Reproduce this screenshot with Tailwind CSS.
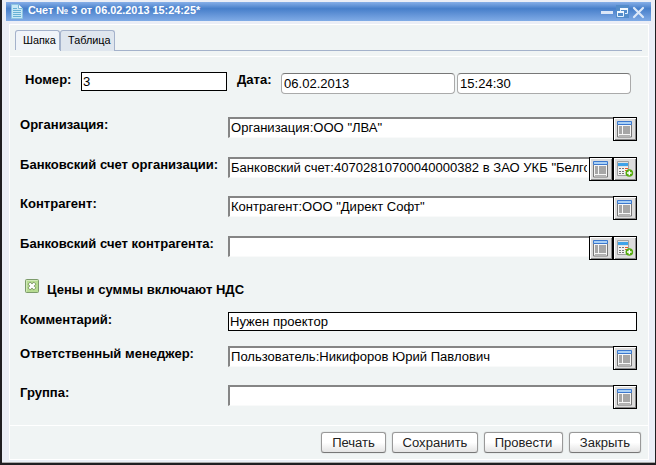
<!DOCTYPE html>
<html lang="ru">
<head>
<meta charset="utf-8">
<title>Счет № 3</title>
<script src="https://cdn.jsdelivr.net/npm/@tailwindcss/browser@4"></script>
</head>
<body class="w-[656px] h-[465px] overflow-hidden bg-[#201e21] font-['Liberation_Sans',Arial,sans-serif] text-[13.06px] leading-[16px] text-black">
<svg class="hidden">
  <symbol id="list" viewBox="0 0 16 17">
    <path d="M.5 3.500h14v12.500H.5z" fill="#f6f6f6" stroke="#777"/>
    <path d="M.5.5h14v3H.5z" fill="#a9d0f5" stroke="#3b78cf"/>
    <path d="M2 5h3v8H2zM6 5h7v8H6z" fill="#a6a6a6"/>
    <path d="M2 14h11v1H2z" fill="#b0b0b0"/>
  </symbol>
  <symbol id="add" viewBox="0 0 17 17">
    <path d="M.5.5h11v14H.5z" fill="#e2e2e2" stroke="#a0a0a0"/>
    <path d="M1 2h10v3H1z" fill="#3fa3e8"/>
    <path d="M1 6h10v8H1z" fill="#f2f2f2"/>
    <path d="M2 7.500h2M5 7.500h2M2 10.500h2M5 10.500h2M2 12.500h2M5 12.500h2" stroke="#777"/>
    <path d="M8 7.500h3M8 9.500h2" stroke="#ed5b25"/>
    <circle cx="12.300" cy="12" r="3.800" fill="#55ab0c"/>
    <path d="M12.300 9.700v4.600M10 12h4.600" stroke="#fff" stroke-width="1.400"/>
  </symbol>
</svg>
<div class="ml-[2px] w-[653px] pt-[2px] h-[463px] bg-[#ebeef6] border-b border-[#aaa]">
  <div class="ml-1 w-[645px] h-[19px] flex items-start bg-linear-to-b from-[#86afe8] via-[#477fca] via-35% to-[#80abe6]">
    <svg class="ml-[5px] mt-[2px] w-3 h-[15px]" viewBox="0 0 12 15"><path d="M.5.5h7l4 4v10H.5z" fill="#c7e8f6" stroke="#8dc5e2"/><path d="M7.500.5v4h4" fill="#f1fbff" stroke="#79b5d5"/><path d="M2 4.500h4M2 6.500h8M2 8.500h8M2 10.500h8M2 12.500h8" stroke="#66b1d5"/></svg>
    <div class="ml-[5px] grow font-bold text-[10.87px] leading-[16px] text-white whitespace-nowrap">Счет № 3 от 06.02.2013 15:24:25*</div>
    <svg class="w-[45px] h-[15px] mt-[2px] mr-[5px]" viewBox="0 0 45 15">
      <path d="M0 7h12v3H0z" fill="#dce7f8"/>
      <path d="M15 1h13v13H15z" fill="#538cca"/>
      <path d="M19.500 9V4.500h7v5H24" fill="none" stroke="#e4f2ff"/><path d="M19 4h8v2h-8z" fill="#f2f9ff"/>
      <path d="M16.500 7.500h6v5h-6z" fill="#538cca" stroke="#e4f2ff"/><path d="M16 7h7v2h-7z" fill="#f2f9ff"/>
      <path d="M33 4l9 9M42 4l-9 9" stroke="#dce8f9" stroke-width="2.200" stroke-linecap="round"/>
    </svg>
  </div>
  <div class="ml-[7px] mt-[3px] w-[640px] h-[436px] border border-white bg-[#f0f4f4] flex flex-col">
    <div class="h-8 border-b border-white pl-[5px] pr-[6px] pt-[5px] flex items-start text-[10.87px] leading-[19px]">
      <div class="w-[45px] h-5 pl-[7px] rounded-t-[3px] border border-b-0 border-[#a4b2cb] bg-[#f0f4f9] whitespace-nowrap">Шапка</div>
      <div class="w-[55px] h-[21px] pl-[7px] rounded-t-[3px] border border-b-0 border-[#a4b2cb] bg-[#dfe6ee] whitespace-nowrap">Таблица</div>
      <div class="h-[21px] grow border-b border-[#a4b2cb]"></div>
    </div>
    <div class="h-[369px] border-b border-white pl-[10px] pr-[11px]">
      <div class="flex items-start h-[60px] pt-[15px] pl-[5px]">
        <b class="w-14">Номер:</b>
        <div class="w-[146px] h-[19px] border border-black bg-white pl-px leading-[18px]">3</div>
        <b class="w-11 ml-[10px]">Дата:</b>
        <div class="mt-px w-[174px] h-[21px] rounded-[4px] border border-[#aaa] border-t-[#777] bg-white pl-[2px] leading-[20px]">06.02.2013</div>
        <div class="mt-px ml-[2px] w-[174px] h-[21px] rounded-[4px] border border-[#aaa] border-t-[#777] bg-white pl-[2px] leading-[20px]">15:24:30</div>
      </div>
      <div class="flex items-start h-10">
        <b class="w-[208px] whitespace-nowrap">Организация:</b>
        <div class="w-[385px] h-[21px] border-t-2 border-l-2 border-b border-[#858585] border-b-[#f9fafa] bg-white pl-px leading-[18px] whitespace-nowrap overflow-hidden">Организация:ООО "ЛВА"</div>
        <div class="w-6 h-6 border border-black bg-[#dcdcdc] shadow-[inset_1px_1px_0_#fff,inset_-1px_-1px_0_#888] pl-[3px] pt-[3px]"><svg class="w-4 h-[17px]"><use href="#list"/></svg></div>
      </div>
      <div class="flex items-start h-[39px]">
        <b class="w-[208px] whitespace-nowrap">Банковский счет организации:</b>
        <div class="w-[361px] h-[21px] border-t-2 border-l-2 border-b border-[#858585] border-b-[#f9fafa] bg-white pl-px pr-[2px] leading-[18px]"><div class="overflow-hidden whitespace-nowrap">Банковский счет:40702810700040000382 в ЗАО УКБ "Белго</div></div>
        <div class="w-6 h-6 border border-black bg-[#dcdcdc] shadow-[inset_1px_1px_0_#fff,inset_-1px_-1px_0_#888] pl-[3px] pt-[3px]"><svg class="w-4 h-[17px]"><use href="#list"/></svg></div>
        <div class="w-6 h-6 border border-black bg-[#dcdcdc] shadow-[inset_1px_1px_0_#fff,inset_-1px_-1px_0_#888] pl-[3px] pt-[3px]"><svg class="w-[17px] h-[17px]"><use href="#add"/></svg></div>
      </div>
      <div class="flex items-start h-10">
        <b class="w-[208px] whitespace-nowrap">Контрагент:</b>
        <div class="w-[385px] h-[21px] border-t-2 border-l-2 border-b border-[#858585] border-b-[#f9fafa] bg-white pl-px leading-[18px] whitespace-nowrap overflow-hidden">Контрагент:ООО "Директ Софт"</div>
        <div class="w-6 h-6 border border-black bg-[#dcdcdc] shadow-[inset_1px_1px_0_#fff,inset_-1px_-1px_0_#888] pl-[3px] pt-[3px]"><svg class="w-4 h-[17px]"><use href="#list"/></svg></div>
      </div>
      <div class="flex items-start h-[43px]">
        <b class="w-[208px] whitespace-nowrap">Банковский счет контрагента:</b>
        <div class="w-[361px] h-[21px] border-t-2 border-l-2 border-b border-[#858585] border-b-[#f9fafa] bg-white"></div>
        <div class="w-6 h-6 border border-black bg-[#dcdcdc] shadow-[inset_1px_1px_0_#fff,inset_-1px_-1px_0_#888] pl-[3px] pt-[3px]"><svg class="w-4 h-[17px]"><use href="#list"/></svg></div>
        <div class="w-6 h-6 border border-black bg-[#dcdcdc] shadow-[inset_1px_1px_0_#fff,inset_-1px_-1px_0_#888] pl-[3px] pt-[3px]"><svg class="w-[17px] h-[17px]"><use href="#add"/></svg></div>
      </div>
      <div class="flex items-start h-[33px] pl-[5px]">
        <svg class="w-[14px] h-[14px]" viewBox="0 0 14 14"><rect x=".5" y=".5" width="13" height="13" rx="1" fill="#b7dc91" stroke="#7c9b6b"/><path d="M1.500 12.500v-11h11" fill="none" stroke="#d2e9bb"/><path d="M4 4l6 6M10 4l-6 6" stroke="#688451" stroke-width="3.800"/><path d="M4.300 4.300l5.400 5.400M9.700 4.300l-5.400 5.400" stroke="#fff" stroke-width="2.400"/></svg>
        <b class="ml-2 mt-[3px] whitespace-nowrap">Цены и суммы включают НДС</b>
      </div>
      <div class="flex items-start h-[34px]">
        <b class="w-[208px] whitespace-nowrap">Комментарий:</b>
        <div class="w-[409px] h-[19px] border border-black bg-white pl-px leading-[18px]">Нужен проектор</div>
      </div>
      <div class="flex items-start h-[39px]">
        <b class="w-[208px] whitespace-nowrap">Ответственный менеджер:</b>
        <div class="w-[385px] h-[21px] border-t-2 border-l-2 border-b border-[#858585] border-b-[#f9fafa] bg-white pl-px leading-[18px] whitespace-nowrap overflow-hidden">Пользователь:Никифоров Юрий Павлович</div>
        <div class="w-6 h-6 border border-black bg-[#dcdcdc] shadow-[inset_1px_1px_0_#fff,inset_-1px_-1px_0_#888] pl-[3px] pt-[3px]"><svg class="w-4 h-[17px]"><use href="#list"/></svg></div>
      </div>
      <div class="flex items-start">
        <b class="w-[208px] whitespace-nowrap">Группа:</b>
        <div class="w-[385px] h-[21px] border-t-2 border-l-2 border-b border-[#858585] border-b-[#f9fafa] bg-white"></div>
        <div class="w-6 h-6 border border-black bg-[#dcdcdc] shadow-[inset_1px_1px_0_#fff,inset_-1px_-1px_0_#888] pl-[3px] pt-[3px]"><svg class="w-4 h-[17px]"><use href="#list"/></svg></div>
      </div>
    </div>
    <div class="flex justify-end gap-[6px] pt-[6px] pr-[7px] text-center leading-[19px] text-[#222]">
      <div class="w-[65px] h-[21px] rounded-[3px] border border-[#999] border-b-[#777] bg-linear-to-b from-white from-50% to-[#e4e4e4] shadow-[0_0_1px_#999]">Печать</div>
      <div class="w-[86px] h-[21px] rounded-[3px] border border-[#999] border-b-[#777] bg-linear-to-b from-white from-50% to-[#e4e4e4] shadow-[0_0_1px_#999]">Сохранить</div>
      <div class="w-[79px] h-[21px] rounded-[3px] border border-[#999] border-b-[#777] bg-linear-to-b from-white from-50% to-[#e4e4e4] shadow-[0_0_1px_#999]">Провести</div>
      <div class="w-[72px] h-[21px] rounded-[3px] border border-[#999] border-b-[#777] bg-linear-to-b from-white from-50% to-[#e4e4e4] shadow-[0_0_1px_#999]">Закрыть</div>
    </div>
  </div>
</div>
</body>
</html>
